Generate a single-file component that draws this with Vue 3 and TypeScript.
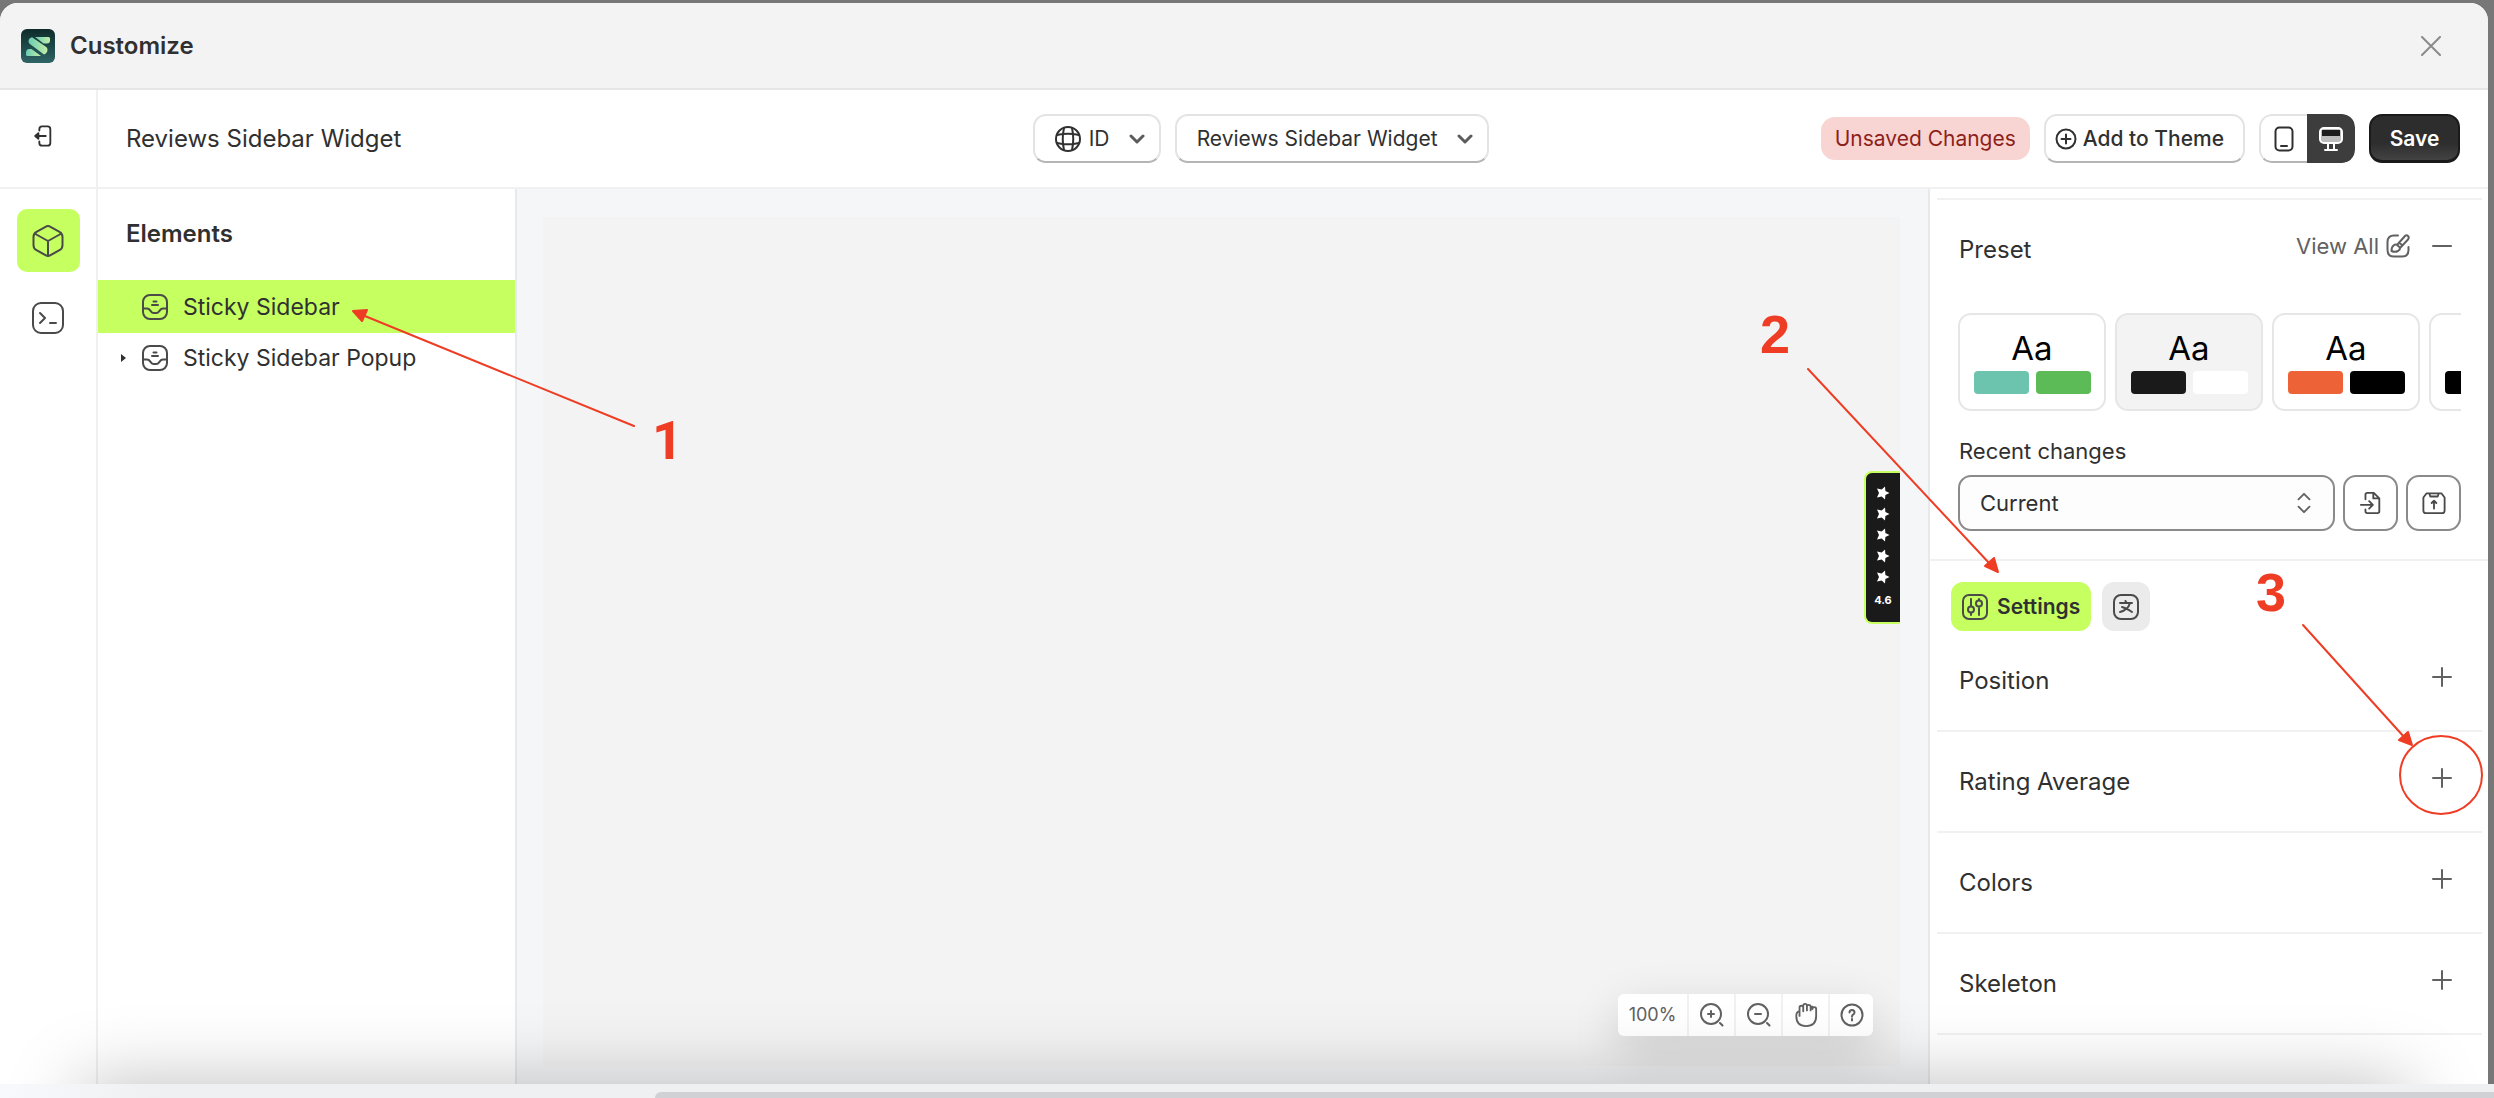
<script setup lang="ts">
import { ref } from 'vue'

interface Preset {
  id: number
  sample: string
  colors: [string, string]
}

const presets: Preset[] = [
  { id: 1, sample: 'Aa', colors: ['#6cc3ae', '#5cbb57'] },
  { id: 2, sample: 'Aa', colors: ['#1a1a1a', '#ffffff'] },
  { id: 3, sample: 'Aa', colors: ['#ee6237', '#000000'] },
  { id: 4, sample: '', colors: ['#000000', '#000000'] },
]
const activePreset = ref(2)
const sections: string[] = ['Position', 'Rating Average', 'Colors', 'Skeleton']
const device = ref<'mobile' | 'desktop'>('desktop')
const language = ref('ID')
const widget = ref('Reviews Sidebar Widget')
const version = ref('Current')
</script>

<template>
  <div class="page">
    <div class="modal">
      <header class="titlebar">
        <svg class="logo" viewBox="0 0 34 34" aria-hidden="true">
          <defs>
            <linearGradient id="logoBg" x1="0" y1="0" x2="0" y2="1">
              <stop offset="0" stop-color="#0d2b2a" />
              <stop offset="1" stop-color="#2f6466" />
            </linearGradient>
            <linearGradient id="logoFg" x1="0" y1="0" x2="1" y2="0">
              <stop offset="0" stop-color="#69cdb4" />
              <stop offset="1" stop-color="#c3eda6" />
            </linearGradient>
          </defs>
          <rect width="34" height="34" rx="6" fill="url(#logoBg)" />
          <path d="M14 8h13.500q1.500 0 1.500 1.500v2q0 3-3 3h-3.500z" fill="url(#logoFg)" />
          <path d="M11 8.200q-3.500 1-3.500 4.300 0 2 2 3L23 25.500q3.500-1.500 3.500-5 0-2-2-3z" fill="url(#logoFg)" />
          <path d="M20 27H6.500Q5 27 5 25.500v-1.500q0-4 3.500-4h2z" fill="url(#logoFg)" />
        </svg>
        <h1>Customize</h1>
        <button class="plain close" aria-label="Close">
          <svg viewBox="0 0 20 20"><path d="M1 1l18 18M19 1L1 19" /></svg>
        </button>
      </header>

      <div class="body">
        <nav class="rail">
          <button class="plain exit" aria-label="Exit">
            <svg viewBox="0 0 20 24"><path d="M6 6V4.500Q6 1.500 9 1.500h6q3 0 3 3v15q0 3-3 3H9q-3 0-3-3V18M1.500 12H13M5 9l-3.500 3L5 15z" /></svg>
          </button>
          <button class="tool on" aria-label="Elements">
            <svg viewBox="0 0 32 32"><path d="M13.500 1.800q2.500-1.400 5 0l9 5q3 1.700 3 5v8.400q0 3.300-3 5l-9 5q-2.500 1.400-5 0l-9-5q-3-1.700-3-5v-8.400q0-3.300 3-5zM2.500 8.500L16 16l13.500-7.500M16 16v15" /></svg>
          </button>
          <button class="tool" aria-label="Custom code">
            <svg viewBox="0 0 32 32"><rect x="1" y="1" width="30" height="30" rx="8" /><path d="M8 11l5 5-5 5M18 21h6" /></svg>
          </button>
        </nav>

        <div class="work">
          <div class="topbar">
            <div class="side"><h2>Reviews Sidebar Widget</h2></div>
            <div class="selects">
              <label class="pick lang">
                <svg class="globe" viewBox="0 0 26 26"><circle cx="13" cy="13" r="12" /><path d="M9 2q-2.500 11 0 22M17 2q2.500 11 0 22M2 9q11-2.500 22 0M2 17q11 2.500 22 0" /></svg>
                <select v-model="language" aria-label="Language"><option>ID</option></select>
                <svg class="chev" viewBox="0 0 16 10"><path d="M2 2l6 6 6-6" /></svg>
              </label>
              <label class="pick">
                <select v-model="widget" aria-label="Widget"><option>Reviews Sidebar Widget</option></select>
                <svg class="chev" viewBox="0 0 16 10"><path d="M2 2l6 6 6-6" /></svg>
              </label>
            </div>
            <div class="actions">
              <span class="badge">Unsaved Changes</span>
              <button class="add">
                <svg viewBox="0 0 22 22"><circle cx="11" cy="11" r="9.500" /><path d="M11 6.500v9M6.500 11h9" /></svg>Add to Theme
              </button>
              <div class="devices">
                <button :class="{ on: device === 'mobile' }" aria-label="Mobile" @click="device = 'mobile'">
                  <svg viewBox="0 0 26 26"><rect x="4.500" y="1.500" width="17" height="23" rx="4" /><path d="M10 20h6" /></svg>
                </button>
                <button :class="{ on: device === 'desktop' }" aria-label="Desktop" @click="device = 'desktop'">
                  <svg viewBox="0 0 26 26"><rect x="2" y="2" width="22" height="15" rx="4" fill="#bdbdbd" /><path d="M10 17v6M16 17v6M7 24h12" /><rect x="4" y="4" width="18" height="6" fill="#1d1d1d" stroke="none" /></svg>
                </button>
              </div>
              <button class="save">Save</button>
            </div>
          </div>

          <div class="columns">
            <aside class="elements">
              <h3>Elements</h3>
              <ul>
                <li class="on">
                  <span class="caret" />
                  <svg viewBox="0 0 26 26"><rect x="1" y="1" width="24" height="24" rx="7" /><path d="M1 14.500h4q2 0 3.200 2l1 1.200q.8 1.300 2.500 1.300h2.600q1.700 0 2.500-1.300l1-1.200q1.200-2 3.200-2h4M11.500 7.500h3M10 11h6" /></svg>
                  <a href="#sidebar">Sticky Sidebar</a>
                </li>
                <li>
                  <span class="caret open" />
                  <svg viewBox="0 0 26 26"><rect x="1" y="1" width="24" height="24" rx="7" /><path d="M1 14.500h4q2 0 3.200 2l1 1.200q.8 1.300 2.500 1.300h2.600q1.700 0 2.500-1.300l1-1.200q1.200-2 3.200-2h4M11.500 7.500h3M10 11h6" /></svg>
                  <a href="#popup">Sticky Sidebar Popup</a>
                </li>
              </ul>
            </aside>

            <main class="canvas">
              <div class="preview">
                <div class="rating">
                  <svg v-for="n in 5" :key="n" viewBox="0 0 14 14"><path d="M13.500 7L9.400 8.900 9 13.500 5.700 10.500 1 11.500 3 7 1 2.500l4.700 1L9 .5l.4 4.600z" /></svg>
                  <span>4.6</span>
                </div>
                <div class="zoombar">
                  <span>100%</span>
                  <button aria-label="Zoom in"><svg viewBox="0 0 24 24"><circle cx="11" cy="11" r="10" /><path d="M11 8v6M8 11h6M20 20l2.500 2.500" /></svg></button>
                  <button aria-label="Zoom out"><svg viewBox="0 0 24 24"><circle cx="11" cy="11" r="10" /><path d="M8 11h6M20 20l2.500 2.500" /></svg></button>
                  <button aria-label="Pan"><svg viewBox="0 0 24 26"><path d="M5 14V9q-3.500 0-3.500 5 0 11 10.500 11 11 0 11-11V6.500q0-2-2-2t-2 2M5 10V5q0-2 2-2t2 2v4M9 6V3q0-2 2-2t2 2v5M13 4q0-2 2-2t2 2v4M17 6q0-2 2-2" /></svg></button>
                  <button aria-label="Help"><svg viewBox="0 0 24 24"><circle cx="12" cy="12" r="10.500" /><path d="M9.500 9.500q0-2.500 2.500-2.500t2.500 2.500q0 1.500-1.500 2.200-1 .5-1 2M12 16v1.500" /></svg></button>
                </div>
              </div>
            </main>

            <aside class="panel">
              <section class="preset">
                <div class="row">
                  <h3>Preset</h3>
                  <div class="tools">
                    <a href="#presets">View All
                      <svg viewBox="0 0 24 24"><path d="M12 1.500H8q-6.500 0-6.500 6.500v8q0 6.500 6.500 6.500h8q6.500 0 6.500-6.500v-3M11 11l8-9q1.500-1.500 3 0t0 3.500l-8 8.500M11 11q-1.500-1-3.500.5T5.500 17q3.500 1.500 6.500 0 2.500-1.500 2-3.500zM13 8.500l3.500 3" /></svg>
                    </a>
                    <button class="plain" aria-label="Collapse Preset"><svg viewBox="0 0 20 20"><path d="M1 10h18" /></svg></button>
                  </div>
                </div>
                <div class="cards">
                  <button v-for="p in presets" :key="p.id" class="card" :class="{ on: p.id === activePreset }" @click="activePreset = p.id">
                    <span class="sample">{{ p.sample }}</span>
                    <span class="swatches"><i v-for="(c, n) in p.colors" :key="n" :style="{ background: c }" /></span>
                  </button>
                </div>
                <label class="caption" for="version">Recent changes</label>
                <div class="history">
                  <div class="version">
                    <select id="version" v-model="version"><option>Current</option></select>
                    <svg viewBox="0 0 16 24"><path d="M2 8l6-6 6 6M2 16l6 6 6-6" /></svg>
                  </div>
                  <button aria-label="Import"><svg viewBox="0 0 26 26"><path d="M7 9V4q0-2 2-2h7l6 6v14q0 2-2 2H9q-2 0-2-2v-2M15.500 2v6H22M2 15h13M11 11l4 4-4 4" /></svg></button>
                  <button aria-label="Export"><svg viewBox="0 0 26 26"><path d="M1.500 7L5 2.500h16L24.500 7v14q0 3-3 3h-17q-3 0-3-3zM8 3l1 3h8l1-3M13 19v-8M10.500 13L13 10.500l2.500 2.500" /></svg></button>
                </div>
              </section>

              <div class="tabs">
                <button class="on">
                  <svg viewBox="0 0 26 26"><rect x="1" y="1" width="24" height="24" rx="6" /><path d="M9 5v7M9 19v2M17 14v7M17 5v1" /><circle cx="9" cy="15.500" r="3" /><circle cx="17" cy="9.500" r="3" /></svg>Settings
                </button>
                <button aria-label="Translations">
                  <svg viewBox="0 0 26 26"><rect x="1" y="1" width="24" height="24" rx="7" /><path d="M7 9h12M12.500 7l1 2M17 9q-2 7-10 9M9 13q4 1 10 5" /></svg>
                </button>
              </div>

              <div v-for="s in sections" :key="s" class="row line">
                <h3>{{ s }}</h3>
                <button class="plain" :aria-label="'Expand ' + s"><svg viewBox="0 0 20 20"><path d="M1 10h18M10 1v18" /></svg></button>
              </div>
            </aside>
          </div>
        </div>
      </div>

      <div class="shade" />
      <svg class="note first" width="700" height="480" viewBox="0 0 700 480">
        <path d="M634 426L360 314" /><path class="head" d="M353 311l14-1-5 11z" />
        <text x="652" y="459">1</text>
      </svg>
      <svg class="note second" width="788" height="820" viewBox="1700 0 788 820">
        <path d="M1808 369l182 195" /><path class="head" d="M1998 572l-13-6 9-8z" />
        <text x="1760" y="353">2</text>
        <path d="M2303 625l102 113" /><path class="head" d="M2412 745l-13-5 9-8z" />
        <text x="2256" y="611">3</text>
        <ellipse cx="2441" cy="775" rx="41" ry="39" />
      </svg>
    </div>
    <footer class="scroller"><div /></footer>
  </div>
</template>

<style>
body {
  margin: 0;
}
</style>

<style scoped>
.page {
  min-height: 100vh;
  display: flex;
  flex-direction: column;
  background: #777;
  font-family: Inter, "Liberation Sans", sans-serif;
  font-size: 24px;
  color: #303030;
}
* {
  box-sizing: border-box;
}
h1, h2, h3, ul {
  margin: 0;
  padding: 0;
  font-size: inherit;
  font-weight: 500;
  list-style: none;
}
button, select {
  font: inherit;
  color: inherit;
  margin: 0;
  padding: 0;
}
a {
  color: inherit;
  text-decoration: none;
}
svg {
  display: block;
  flex: none;
  fill: none;
  stroke: currentColor;
  stroke-width: 2;
  stroke-linecap: round;
  stroke-linejoin: round;
}
.plain {
  border: 0;
  background: none;
  display: flex;
}
.plain svg {
  width: 20px;
  height: 20px;
  color: #616161;
}
.modal {
  flex: 1;
  position: relative;
  display: flex;
  flex-direction: column;
  margin: 3px 6px 0 0;
  background: #fff;
  border-radius: 18px 18px 0 0;
  overflow: hidden;
}
.titlebar {
  height: 87px;
  flex: none;
  display: flex;
  align-items: center;
  gap: 15px;
  padding: 0 47px 0 21px;
  background: #f3f3f3;
  border-bottom: 2px solid #e6e6e6;
}
.logo {
  width: 34px;
  height: 34px;
  stroke: none;
}
.titlebar h1 {
  font-weight: 600;
}
.close {
  margin-left: auto;
}
.close svg {
  color: #8a8a8a;
}
.body {
  flex: 1;
  display: flex;
}
.rail {
  width: 98px;
  flex: none;
  display: flex;
  flex-direction: column;
  align-items: center;
  border-right: 2px solid #f0f0f0;
}
.exit {
  width: 100%;
  height: 99px;
  padding: 35px 0 0 33px;
  border-bottom: 2px solid #f1f1f1;
  margin-bottom: 20px;
}
.exit svg {
  height: 22px;
  color: #303030;
}
.tool {
  width: 63px;
  height: 63px;
  margin-bottom: 14px;
  display: grid;
  place-items: center;
  border: 0;
  border-radius: 10px;
  background: none;
  color: #4a4a4a;
}
.tool svg {
  width: 32px;
  height: 32px;
}
.on.tool {
  background: #c6ff60;
}
.work {
  flex: 1;
  min-width: 0;
  display: flex;
  flex-direction: column;
}
.topbar {
  height: 99px;
  flex: none;
  display: flex;
  align-items: center;
  padding: 0 28px;
  border-bottom: 2px solid #f1f1f1;
}
.side {
  flex: 14 1 0;
}
.side h2 {
  font-weight: 400;
}
.selects {
  display: flex;
  gap: 14px;
}
.pick {
  height: 49px;
  display: flex;
  align-items: center;
  gap: 19px;
  padding: 0 14px 0 20px;
  border: 2px solid #e3e3e3;
  border-bottom-color: #b5b5b5;
  border-radius: 13px;
  font-size: 21px;
}
.pick select {
  appearance: none;
  border: 0;
  background: none;
}
.pick .globe {
  width: 26px;
  height: 26px;
  margin-right: -11px;
}
.pick .chev {
  width: 16px;
  height: 10px;
  stroke-width: 3;
  color: #5c5c5c;
}
.actions {
  flex: 15 1 0;
  display: flex;
  align-items: center;
  justify-content: flex-end;
  gap: 14px;
  font-size: 21px;
  font-weight: 500;
  white-space: nowrap;
}
.badge {
  height: 43px;
  line-height: 43px;
  padding: 0 14px;
  border-radius: 14px;
  background: #f8d5d2;
  color: #8e1f1b;
  font-weight: 400;
}
.add {
  height: 49px;
  display: flex;
  align-items: center;
  gap: 6px;
  padding: 0 19px 0 9px;
  border: 2px solid #e3e3e3;
  border-bottom-color: #b5b5b5;
  border-radius: 13px;
  background: #fff;
}
.add svg {
  width: 22px;
  height: 22px;
}
.devices {
  display: flex;
  height: 49px;
  border-radius: 13px;
  overflow: hidden;
}
.devices button {
  width: 48px;
  display: grid;
  place-items: center;
  border: 2px solid #e3e3e3;
  border-bottom-color: #b5b5b5;
  border-right: 0;
  border-radius: 13px 0 0 13px;
  background: #fff;
}
.devices .on {
  border: 0;
  border-radius: 0 13px 13px 0;
  background: #3d3d3d;
  color: #fff;
}
.devices svg {
  width: 26px;
  height: 26px;
}
.save {
  height: 49px;
  width: 91px;
  border: 2px solid #1a1a1a;
  border-bottom-width: 3px;
  border-radius: 13px;
  background: linear-gradient(#2d2d2d 60%, #434343);
  color: #fff;
  font-weight: 600;
}
.columns {
  flex: 1;
  display: flex;
}
.elements {
  width: 419px;
  flex: none;
  border-right: 2px solid #e6eaed;
}
.elements h3 {
  padding: 31px 28px 32px;
  line-height: 28px;
  font-weight: 600;
}
.elements ul {
  font-size: 23px;
  font-weight: 400;
}
.elements li {
  height: 50px;
  display: flex;
  align-items: center;
  padding-left: 23px;
}
.elements .on {
  height: 53px;
  background: #c6ff60;
}
.elements svg {
  width: 26px;
  height: 26px;
  margin-right: 15px;
  color: #4a4a4a;
}
.caret {
  width: 5px;
  margin-right: 16px;
}
.caret.open {
  border: solid transparent;
  border-width: 4px 0 4px 5px;
  border-left-color: #303030;
}
.canvas {
  flex: 1;
  min-width: 0;
  display: flex;
  padding: 28px 28px 18px 26px;
  background: #f4f6f8;
}
.preview {
  flex: 1;
  position: relative;
  background: #f3f3f3;
}
.rating {
  position: absolute;
  right: 0;
  top: 254px;
  width: 36px;
  height: 153px;
  display: flex;
  flex-direction: column;
  align-items: center;
  gap: 7px;
  padding-top: 13px;
  border: 2px solid #c6ff60;
  border-right: 0;
  border-radius: 8px 0 0 8px;
  background: #1a1a1a;
  color: #fff;
  font-size: 11px;
  font-weight: 700;
}
.rating svg {
  width: 14px;
  height: 14px;
  fill: #fff;
  stroke: none;
}
.rating span {
  line-height: 18px;
}
.zoombar {
  position: absolute;
  right: 27px;
  bottom: 30px;
  height: 42px;
  display: flex;
  border-radius: 6px;
  background: #fff;
  box-shadow: 0 16px 48px rgba(0, 0, 0, 0.16);
  font-size: 18px;
  color: #616161;
}
.zoombar span {
  width: 69px;
  line-height: 42px;
  text-align: center;
}
.zoombar button {
  width: 47px;
  display: grid;
  place-items: center;
  border: 0;
  border-left: 2px solid #f1f1f1;
  background: none;
}
.zoombar button:last-child {
  width: 45px;
}
.zoombar svg {
  width: 24px;
  height: 24px;
}
.panel {
  width: 560px;
  flex: none;
  border-left: 2px solid #e6eaed;
}
.preset {
  padding: 9px 0 28px;
  border-bottom: 2px solid #f1f1f1;
}
.row {
  height: 101px;
  display: flex;
  align-items: center;
  justify-content: space-between;
  margin: 0 6px 0 7px;
  padding: 0 30px 0 22px;
}
.row h3 {
  font-weight: 400;
}
.preset .row {
  border-top: 2px solid #f1f1f1;
}
.line {
  border-bottom: 2px solid #f1f1f1;
}
.row .plain, .tools {
  margin-bottom: 8px;
}
.tools {
  display: flex;
  align-items: center;
  gap: 22px;
}
.tools .plain {
  margin: 0;
}
.tools a {
  display: flex;
  align-items: center;
  gap: 7px;
  font-size: 22px;
  color: #616161;
}
.tools a svg {
  width: 24px;
  height: 24px;
}
.cards {
  display: flex;
  gap: 9px;
  margin: 14px 27px 26px 28px;
  overflow: hidden;
}
.card {
  width: 148px;
  height: 98px;
  flex: none;
  display: flex;
  flex-direction: column;
  align-items: center;
  gap: 4px;
  padding: 14px 0 0;
  border: 2px solid #e6e6e6;
  border-radius: 13px;
  background: #fff;
  color: #000;
}
.card.on {
  background: #f3f3f3;
}
.sample {
  height: 38px;
  font-size: 33px;
  line-height: 38px;
}
.swatches {
  display: flex;
  gap: 7px;
}
.swatches i {
  width: 55px;
  height: 23px;
  border-radius: 4px;
}
.caption {
  display: block;
  margin-left: 29px;
  line-height: 28px;
  font-size: 22px;
}
.history {
  display: flex;
  gap: 8px;
  margin: 10px 27px 0 28px;
}
.version {
  flex: 1;
  position: relative;
}
.version select {
  appearance: none;
  width: 100%;
  height: 56px;
  padding: 0 20px;
  border: 2px solid #8a8a8a;
  border-radius: 13px;
  background: #fdfdfd;
  font-size: 22px;
}
.version svg {
  position: absolute;
  right: 23px;
  top: 17px;
  width: 16px;
  height: 22px;
  color: #616161;
}
.history button {
  width: 55px;
  height: 56px;
  display: grid;
  place-items: center;
  border: 2px solid #8a8a8a;
  border-radius: 13px;
  background: #fff;
  color: #4a4a4a;
}
.history button svg {
  width: 26px;
  height: 24px;
}
.tabs {
  display: flex;
  gap: 11px;
  padding: 21px 21px 0;
}
.tabs button {
  height: 49px;
  display: flex;
  align-items: center;
  gap: 9px;
  padding: 0 11px;
  border: 0;
  border-radius: 12px;
  background: #ebebeb;
  font-size: 21px;
  font-weight: 600;
}
.tabs svg {
  width: 26px;
  height: 26px;
  color: #4a4a4a;
}
.tabs .on {
  background: #c6ff60;
}
.shade {
  position: absolute;
  left: 80px;
  right: 80px;
  bottom: -120px;
  height: 120px;
  box-shadow: 0 0 76px rgba(0, 0, 0, 0.26);
  pointer-events: none;
}
.note {
  position: absolute;
  top: -3px;
  color: #ee3d24;
  pointer-events: none;
}
.first {
  left: 0;
}
.second {
  right: 0;
}
.note .head {
  fill: currentColor;
}
.note text {
  fill: currentColor;
  stroke: none;
  font: bold 54px "Liberation Sans", Arial, sans-serif;
}
.note.first text {
  font-family: Roboto, "Liberation Sans", sans-serif;
}
.scroller {
  height: 14px;
  padding-top: 8px;
  background: linear-gradient(90deg, #f8f9fc, #eef0f2 160px);
}
.scroller div {
  height: 6px;
  margin-left: 655px;
  border-radius: 6px 0 0 0;
  background: #cfd1d4;
}
</style>
